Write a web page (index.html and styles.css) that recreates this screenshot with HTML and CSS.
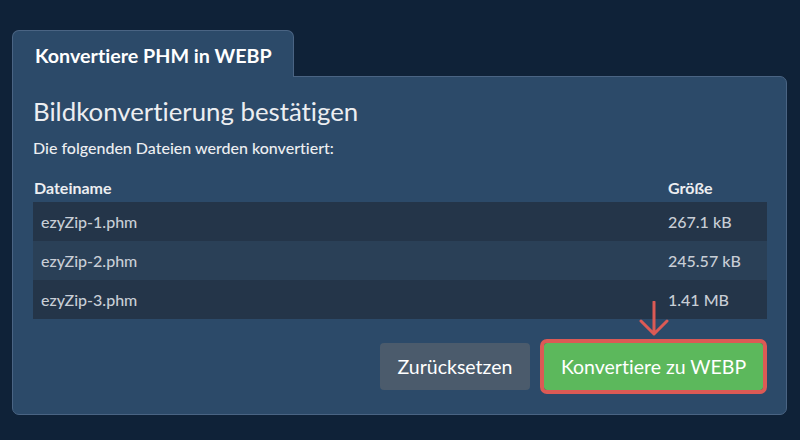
FILE: index.html
```html
<!DOCTYPE html>
<html lang="de">
<head>
<meta charset="utf-8">
<title>Konvertiere PHM in WEBP</title>
<link rel="stylesheet" href="styles.css">
</head>
<body>
<div class="page">
  <div class="card">
    <div class="tabbar">
      <div class="tab">Konvertiere PHM in WEBP</div>
    </div>
    <div class="body">
      <h1 class="title">Bildkonvertierung bestätigen</h1>
      <p class="lead">Die folgenden Dateien werden konvertiert:</p>
      <div class="table">
        <div class="thead">
          <div class="th">Dateiname</div>
          <div class="th">Größe</div>
        </div>
        <div class="row odd"><div class="name">ezyZip-1.phm</div><div class="size">267.1 kB</div></div>
        <div class="row even"><div class="name">ezyZip-2.phm</div><div class="size">245.57 kB</div></div>
        <div class="row odd"><div class="name">ezyZip-3.phm</div><div class="size">1.41 MB</div></div>
      </div>
      <div class="actions">
        <button class="btn btn-reset">Zurücksetzen</button>
        <div class="convert-wrap">
          <svg class="arrow" width="30" height="35" viewBox="0 0 30 35">
            <path d="M15 1 V33 M2 20 L15 33 L28 20" fill="none" stroke="#dc5a55" stroke-width="3" stroke-linecap="round" stroke-linejoin="round"/>
          </svg>
          <button class="btn btn-convert">Konvertiere zu WEBP</button>
        </div>
      </div>
    </div>
  </div>
</div>
</body>
</html>
```

FILE: styles.css
```css
html, body {
  margin: 0;
  padding: 0;
  background: #0f2238;
  font-family: Lato, "Open Sans", sans-serif;
  font-variant-ligatures: none;
  color: #eef0f3;
}

.page {
  padding: 30px 13px 25px 12px;
}

.card {
  display: flex;
  flex-direction: column;
}

.tabbar {
  display: flex;
}

.tab {
  box-sizing: border-box;
  width: 282px;
  height: 47px;
  margin-bottom: -1px;
  padding: 13px 0 0 22px;
  background: #2c4a69;
  border: 1px solid #4a6483;
  border-bottom: none;
  border-radius: 7px 7px 0 0;
  font-size: 19.7px;
  font-weight: 700;
  line-height: 24px;
  color: #ffffff;
  position: relative;
  z-index: 1;
}

.body {
  background: #2c4a69;
  border: 1px solid #4a6483;
  border-radius: 0 7px 7px 7px;
  padding: 19px 19px 24px 20px;
}

.title {
  margin: 0;
  font-size: 25.8px;
  font-weight: 400;
  line-height: 30px;
  color: #eceef1;
}

.lead {
  margin: 12px 0 0 0;
  font-size: 16px;
  font-weight: 500;
  line-height: 19px;
  color: #eceef1;
}

.table {
  margin-top: 21px;
  display: flex;
  flex-direction: column;
}

.thead {
  display: grid;
  grid-template-columns: 1fr 100px;
  padding-bottom: 4px;
  font-size: 16px;
  font-weight: 700;
  line-height: 20px;
  color: #eceef1;
}

.th {
  padding-left: 1px;
}

.row {
  display: grid;
  grid-template-columns: 1fr 100px;
  align-items: center;
  height: 39px;
  font-size: 16px;
  font-weight: 500;
  color: #c8ced6;
}

.row.odd {
  background: #243549;
}

.row.even {
  background: #2a4057;
}

.name {
  padding-left: 8px;
}

.size {
  padding-left: 1px;
}

.actions {
  margin-top: 24px;
  display: flex;
  justify-content: flex-end;
  gap: 14px;
}

.convert-wrap {
  position: relative;
  display: flex;
  margin-right: 4px;
}

.arrow {
  position: absolute;
  left: 50%;
  top: -42px;
  margin-left: -15px;
}

.btn {
  font-family: Lato, "Open Sans", sans-serif;
  font-variant-ligatures: none;
  font-size: 19.5px;
  font-weight: 400;
  color: #ffffff;
  border: none;
  border-radius: 4px;
  height: 47px;
  padding: 0;
  cursor: pointer;
}

.btn-reset {
  background: #4b5b6c;
  width: 150px;
}

.btn-convert {
  background: #5cb85c;
  width: 219px;
  outline: 4px solid #dc5a55;
  outline-offset: 0;
  border-radius: 3px;
}
```
